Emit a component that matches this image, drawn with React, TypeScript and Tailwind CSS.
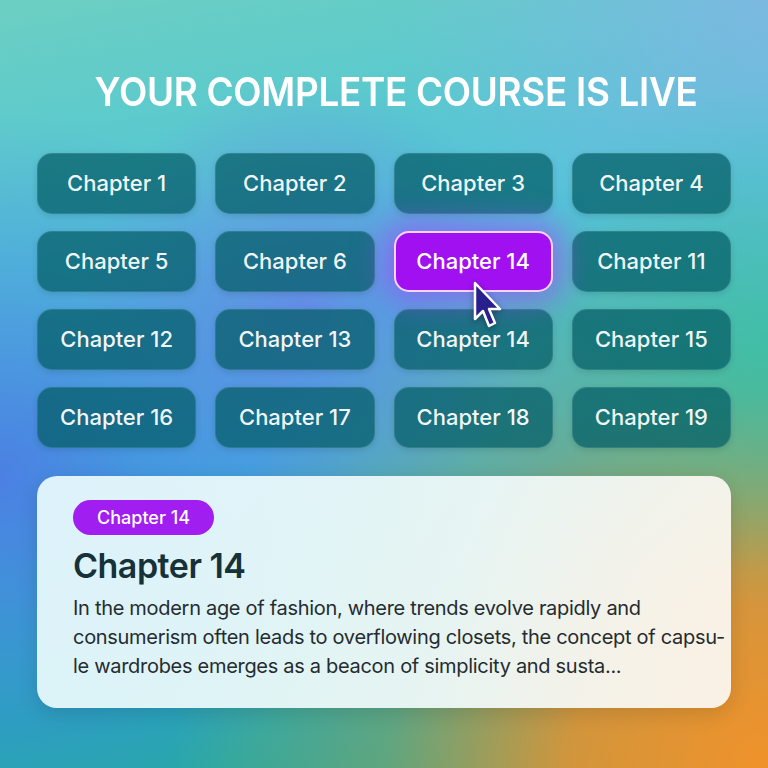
import React from "react";

const chapters = [
  "Chapter 1",
  "Chapter 2",
  "Chapter 3",
  "Chapter 4",
  "Chapter 5",
  "Chapter 6",
  "Chapter 14",
  "Chapter 11",
  "Chapter 12",
  "Chapter 13",
  "Chapter 14",
  "Chapter 15",
  "Chapter 16",
  "Chapter 17",
  "Chapter 18",
  "Chapter 19",
];

const ACTIVE = 6;

const Cursor: React.FC = () => (
  <svg
    width="30"
    height="48"
    viewBox="0 0 30 48"
    className="absolute left-[78px] top-[50px] drop-shadow-[0_2px_3px_rgba(0,0,0,0.35)]"
  >
    <path
      d="M3 2 L3 38 L11 30 L17 45 L23 42 L17 28 L28 28 Z"
      fill="#2a1f8f"
      stroke="#ffffff"
      strokeWidth="2.5"
      strokeLinejoin="round"
    />
  </svg>
);

const App: React.FC = () => {
  return (
    <div className="relative w-[768px] h-[768px] overflow-hidden font-['Inter',sans-serif] bg-[linear-gradient(170deg,#6ccfc2_0%,#4fc6d6_30%,#3bb6da_55%,#24aab8_80%,#2aa896_100%)]">
      <div className="absolute inset-0 bg-[radial-gradient(circle_at_100%_100%,#f0922a_0%,rgba(240,146,42,0.85)_18%,rgba(180,160,70,0.4)_35%,rgba(0,0,0,0)_55%)]" />
      <div className="absolute inset-0 bg-[radial-gradient(circle_at_0%_62%,rgba(80,110,230,0.75)_0%,rgba(80,110,230,0.3)_22%,rgba(0,0,0,0)_40%)]" />
      <div className="absolute inset-0 bg-[radial-gradient(circle_at_100%_0%,rgba(130,180,230,0.8)_0%,rgba(0,0,0,0)_35%)]" />
      <div className="absolute inset-0 bg-[radial-gradient(circle_at_100%_45%,rgba(40,200,160,0.6)_0%,rgba(0,0,0,0)_30%)]" />
      <div className="absolute inset-0 bg-[radial-gradient(ellipse_at_40%_40%,rgba(120,100,240,0.55)_0%,rgba(0,0,0,0)_35%)]" />

      <div className="relative flex flex-col px-[37px]">
        <h1 className="mt-[68px] pl-[26px] text-center text-[40px] font-semibold tracking-[-0.3px] text-white leading-[48px] scale-x-[0.92]">
          YOUR COMPLETE COURSE IS LIVE
        </h1>

        <div className="mt-[37px] grid grid-cols-4 gap-x-[19px] gap-y-[17px]">
          {chapters.map((c, i) =>
            i === ACTIVE ? (
              <div key={i} className="relative z-10">
                <div className="flex h-[61px] items-center justify-center rounded-[15px] border-2 border-[#f5d4ff] bg-[#a010f0] text-[22px] font-medium text-white shadow-[0_0_30px_10px_rgba(170,60,255,0.55)]">
                  {c}
                </div>
                <Cursor />
              </div>
            ) : (
              <div
                key={i}
                className="flex h-[61px] items-center justify-center rounded-[15px] border border-white/10 bg-[#005a62]/70 text-[22px] font-medium text-white/95 shadow-[0_2px_6px_rgba(0,0,0,0.12)]"
              >
                {c}
              </div>
            )
          )}
        </div>

        <div className="mt-[28px] h-[232px] rounded-[20px] bg-[linear-gradient(100deg,rgba(232,250,252,0.93)_0%,rgba(240,250,250,0.93)_60%,rgba(252,246,238,0.95)_100%)] px-[36px] pt-[24px] shadow-[0_6px_20px_rgba(0,0,0,0.12)]">
          <span className="inline-flex h-[35px] items-center rounded-full bg-[#a01ef0] px-[24px] text-[18px] font-medium text-white">
            Chapter 14
          </span>
          <h2 className="mt-[10px] text-[34px] font-semibold leading-[42px] tracking-[-0.5px] text-[#163238]">
            Chapter 14
          </h2>
          <p className="mt-[7px] whitespace-nowrap text-[20px] leading-[29px] text-[#252c30] tracking-[-0.3px]">
            In the modern age of fashion, where trends evolve rapidly and
            <br />
            consumerism often leads to overflowing closets, the concept of capsu-
            <br />
            le wardrobes emerges as a beacon of simplicity and susta...
          </p>
        </div>
      </div>
    </div>
  );
};

export default App;
